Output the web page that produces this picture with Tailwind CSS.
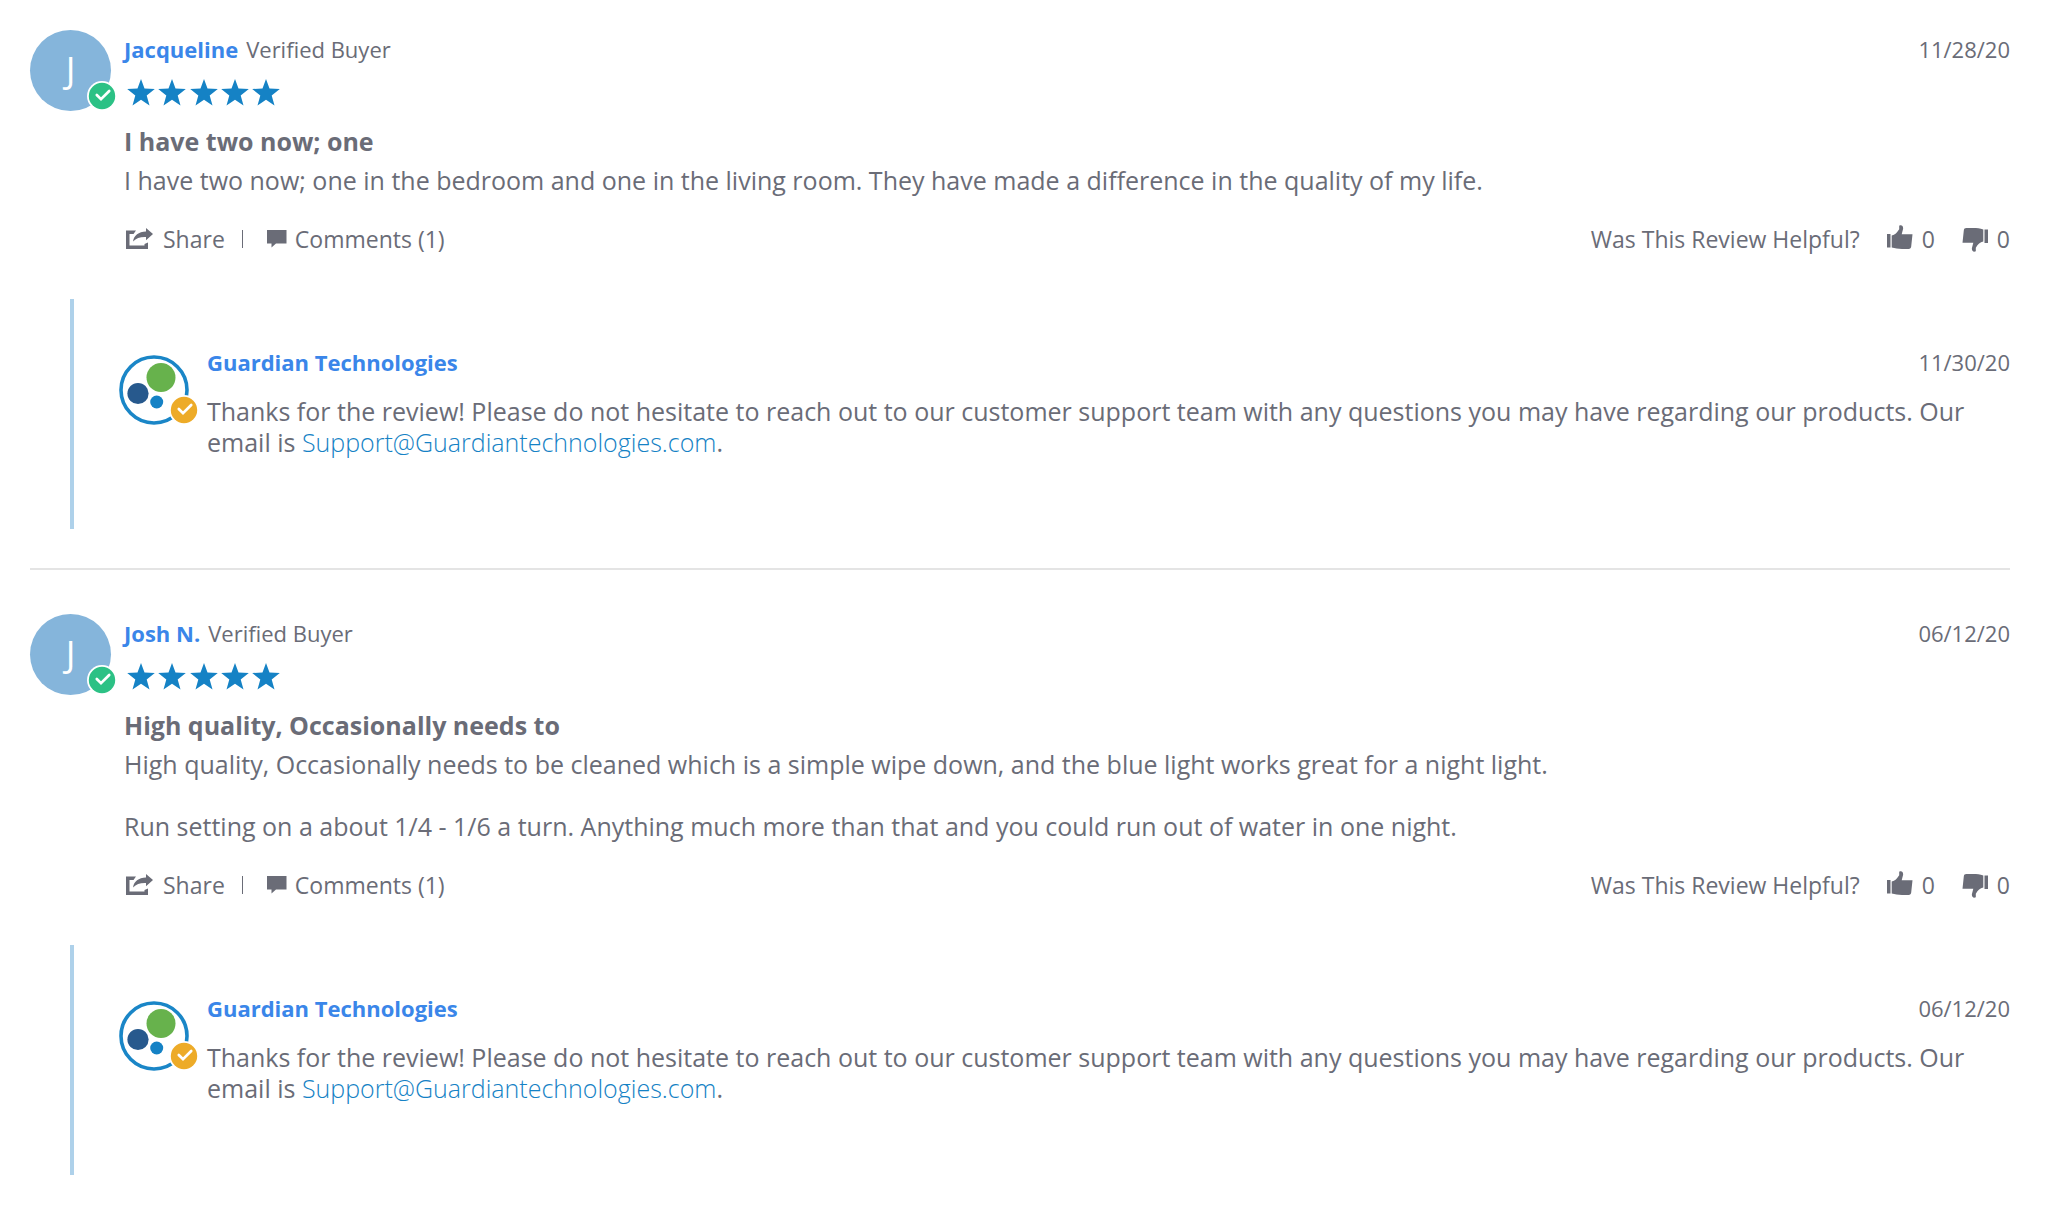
<!DOCTYPE html>
<html lang="en">
<head>
  <meta charset="UTF-8">
  <meta name="viewport" content="width=device-width, initial-scale=1">
  <title>Customer Reviews</title>
  <script src="https://cdn.jsdelivr.net/npm/@tailwindcss/browser@4"></script>
</head>
<body class="bg-white font-['Open_Sans',sans-serif] text-[#6a6c77]">

  <!-- shared icons -->
  <svg class="hidden" aria-hidden="true">
    <symbol id="star" viewBox="0 0 28 27">
      <path d="M14 0l3.5 9.6 10.3.4-8.1 6.4 2.8 10L14 20.7l-8.5 5.7 2.8-10L.2 10l10.3-.4z" />
    </symbol>
    <symbol id="stars" viewBox="0 0 154 27">
      <use href="#star" x="0" width="28" height="27" />
      <use href="#star" x="31" width="28" height="27" />
      <use href="#star" x="63" width="28" height="27" />
      <use href="#star" x="94" width="28" height="27" />
      <use href="#star" x="125" width="28" height="27" />
    </symbol>
    <symbol id="badge" viewBox="0 0 30 30">
      <circle cx="15" cy="15" r="15" fill="#fff" />
      <circle cx="15" cy="15" r="13.2" fill="currentColor" />
      <path d="M9.800 14l4.200 4.200 8.200-8.200" fill="none" stroke="#fff" stroke-width="2.7" stroke-linecap="round" />
    </symbol>
    <symbol id="share" viewBox="0 0 27 22">
      <path d="M10 2.600H0V21h22v-6.500l-3.500 1.500v1.500h-15V6h4z" />
      <path d="M7 13.500C8 7.500 12.500 3.800 20 3.600V0l7 6-7 6.200V9C14 8.800 10.500 10 7 13.500z" />
    </symbol>
    <symbol id="comment" viewBox="0 0 20 18">
      <path d="M0 0h19.500v13.500H9L4.500 17.500v-4H0z" />
    </symbol>
    <symbol id="thumb" viewBox="0 0 26 25">
      <path d="M0 9h3.500v13.500H0z" />
      <path d="M4.700 10.400c3.300-.4 5.300-2.800 7.500-6.100V.7c2.500-1.400 4.500.7 3.800 3.600l-1.300 4.900H25.500l-1.300 12.300c-.2 1.600-1 2.400-2.600 2.400H15c-4 0-7-.5-10.300-1.400z" />
    </symbol>
    <symbol id="guardian" viewBox="0 0 70 70">
      <circle cx="35" cy="35" r="33" fill="#fff" stroke="#1a86c7" stroke-width="3.600" />
      <circle cx="42" cy="22.500" r="14.500" fill="#67b24c" />
      <circle cx="19" cy="38.500" r="10.600" fill="#27598d" />
      <circle cx="37.700" cy="47" r="6.500" fill="#1582c5" />
    </symbol>
  </svg>

  <main class="pl-[30px] pr-[38px] py-[30px]">

    <article class="border-b-2 border-[#e4e4e4] pb-[39px]">
      <div class="flex gap-[13px]">
        <div class="relative size-[81px] shrink-0 rounded-full bg-[#85b5db] text-center text-4xl leading-[79px] text-white">
          J
          <svg class="absolute -right-[6px] bottom-0 size-[30px] text-[#2cc185]"><use href="#badge" /></svg>
        </div>
        <div class="min-w-0 flex-1 pt-[5px]">
          <header class="flex justify-between text-[22px] leading-7">
            <div class="flex gap-2">
              <h2 class="font-bold text-[#3a86e9]">Jacqueline</h2>
              <span>Verified Buyer</span>
            </div>
            <time datetime="2020-11-28">11/28/20</time>
          </header>
          <svg class="ml-[3px] mt-4 h-[27px] w-[154px] fill-[#1582c5]" role="img" aria-label="5 out of 5 stars"><use href="#stars" /></svg>
          <h3 class="mt-[19px] text-[25px] leading-8 font-bold">I have two now; one</h3>
          <p class="mt-2 text-[25px] leading-[31px]">I have two now; one in the bedroom and one in the living room. They have made a difference in the quality of my life.</p>
          <footer class="mt-[27px] flex justify-between text-[23px] leading-8">
            <div class="flex items-center">
              <button class="flex items-center gap-2.5"><svg class="ml-0.5 h-[22px] w-[27px] fill-current"><use href="#share" /></svg>Share</button>
              <span class="ml-[17px] h-[18px] w-px bg-[#6a6c77]"></span>
              <button class="ml-6 flex items-center gap-2"><svg class="h-[18px] w-5 fill-current"><use href="#comment" /></svg>Comments (1)</button>
            </div>
            <div class="flex items-center">
              <span>Was This Review Helpful?</span>
              <button class="ml-[27px] flex items-center gap-[9px]" aria-label="Helpful, 0 votes"><svg class="mb-1 h-[25px] w-[26px] fill-current"><use href="#thumb" /></svg>0</button>
              <button class="ml-[27px] flex items-center gap-[9px]" aria-label="Not helpful, 0 votes"><svg class="h-[25px] w-[26px] rotate-180 fill-current"><use href="#thumb" /></svg>0</button>
            </div>
          </footer>
        </div>
      </div>

      <section class="ml-10 mt-11 flex gap-[18px] border-l-4 border-[#aed1ea] pt-[49px] pb-[71px] pl-[45px]">
        <div class="relative mt-[7px] size-[70px] shrink-0">
          <svg class="size-[70px]"><use href="#guardian" /></svg>
          <svg class="absolute -right-[10px] bottom-0 size-[30px] text-[#edab28]"><use href="#badge" /></svg>
        </div>
        <div class="min-w-0 flex-1">
          <header class="flex justify-between text-[22px] leading-7">
            <h4 class="font-bold text-[#3a86e9]">Guardian Technologies</h4>
            <time datetime="2020-11-30">11/30/20</time>
          </header>
          <p class="mt-5 text-[25px] leading-[31px]">Thanks for the review! Please do not hesitate to reach out to our customer support team with any questions you may have regarding our products. Our email is <a href="mailto:Support@Guardiantechnologies.com" class="font-light text-[#1582c5]">Support@Guardiantechnologies.com</a>.</p>
        </div>
      </section>
    </article>

    <article class="pt-11">
      <div class="flex gap-[13px]">
        <div class="relative size-[81px] shrink-0 rounded-full bg-[#85b5db] text-center text-4xl leading-[79px] text-white">
          J
          <svg class="absolute -right-[6px] bottom-0 size-[30px] text-[#2cc185]"><use href="#badge" /></svg>
        </div>
        <div class="min-w-0 flex-1 pt-[5px]">
          <header class="flex justify-between text-[22px] leading-7">
            <div class="flex gap-2">
              <h2 class="font-bold text-[#3a86e9]">Josh N.</h2>
              <span>Verified Buyer</span>
            </div>
            <time datetime="2020-06-12">06/12/20</time>
          </header>
          <svg class="ml-[3px] mt-4 h-[27px] w-[154px] fill-[#1582c5]" role="img" aria-label="5 out of 5 stars"><use href="#stars" /></svg>
          <h3 class="mt-[19px] text-[25px] leading-8 font-bold">High quality, Occasionally needs to</h3>
          <p class="mt-2 text-[25px] leading-[31px]">High quality, Occasionally needs to be cleaned which is a simple wipe down, and the blue light works great for a night light.<br><br>Run setting on a about 1/4 - 1/6 a turn. Anything much more than that and you could run out of water in one night.</p>
          <footer class="mt-[27px] flex justify-between text-[23px] leading-8">
            <div class="flex items-center">
              <button class="flex items-center gap-2.5"><svg class="ml-0.5 h-[22px] w-[27px] fill-current"><use href="#share" /></svg>Share</button>
              <span class="ml-[17px] h-[18px] w-px bg-[#6a6c77]"></span>
              <button class="ml-6 flex items-center gap-2"><svg class="h-[18px] w-5 fill-current"><use href="#comment" /></svg>Comments (1)</button>
            </div>
            <div class="flex items-center">
              <span>Was This Review Helpful?</span>
              <button class="ml-[27px] flex items-center gap-[9px]" aria-label="Helpful, 0 votes"><svg class="mb-1 h-[25px] w-[26px] fill-current"><use href="#thumb" /></svg>0</button>
              <button class="ml-[27px] flex items-center gap-[9px]" aria-label="Not helpful, 0 votes"><svg class="h-[25px] w-[26px] rotate-180 fill-current"><use href="#thumb" /></svg>0</button>
            </div>
          </footer>
        </div>
      </div>

      <section class="ml-10 mt-11 flex gap-[18px] border-l-4 border-[#aed1ea] pt-[49px] pb-[71px] pl-[45px]">
        <div class="relative mt-[7px] size-[70px] shrink-0">
          <svg class="size-[70px]"><use href="#guardian" /></svg>
          <svg class="absolute -right-[10px] bottom-0 size-[30px] text-[#edab28]"><use href="#badge" /></svg>
        </div>
        <div class="min-w-0 flex-1">
          <header class="flex justify-between text-[22px] leading-7">
            <h4 class="font-bold text-[#3a86e9]">Guardian Technologies</h4>
            <time datetime="2020-06-12">06/12/20</time>
          </header>
          <p class="mt-5 text-[25px] leading-[31px]">Thanks for the review! Please do not hesitate to reach out to our customer support team with any questions you may have regarding our products. Our email is <a href="mailto:Support@Guardiantechnologies.com" class="font-light text-[#1582c5]">Support@Guardiantechnologies.com</a>.</p>
        </div>
      </section>
    </article>

  </main>

</body>
</html>
